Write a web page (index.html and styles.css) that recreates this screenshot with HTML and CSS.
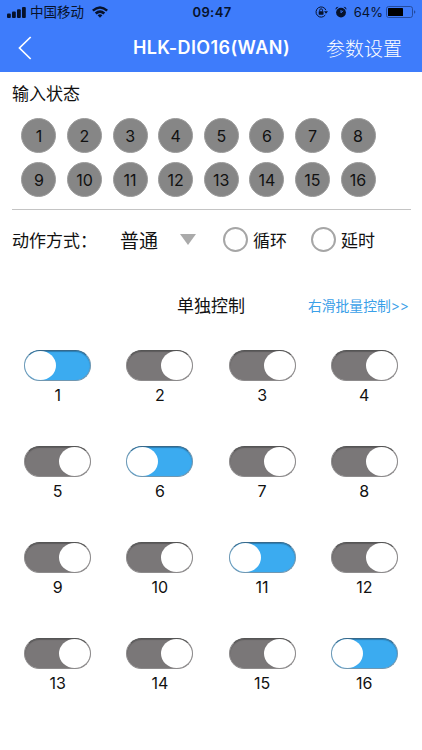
FILE: index.html
```html
<!DOCTYPE html>
<html lang="zh-CN">
<head>
    <meta charset="UTF-8">
    <meta name="viewport" content="width=device-width, initial-scale=1.0">
    <title>HLK-DIO16(WAN)</title>
    <link rel="stylesheet" href="styles.css">
</head>
<body>
    <header class="top">
        <div class="status-bar">
            <div class="status-left">
                <svg class="signal" width="19" height="11" viewBox="0 0 19 11">
                    <rect x="0" y="6.5" width="3.8" height="4.5" rx="1"/>
                    <rect x="5" y="4.5" width="3.8" height="6.5" rx="1"/>
                    <rect x="10" y="2.3" width="3.8" height="8.7" rx="1"/>
                    <rect x="15" y="0" width="3.8" height="11" rx="1"/>
                </svg>
                <span class="carrier">中国移动</span>
                <svg class="wifi" width="16" height="12" viewBox="0 0 16 12">
                    <path d="M0 3.8 Q8 -3.4 16 3.8 L14.3 5.6 Q8 0 1.7 5.6Z"/>
                    <path d="M2.8 6.6 Q8 2 13.2 6.6 L11.4 8.4 Q8 5.4 4.6 8.4Z"/>
                    <path d="M5.6 9.3 Q8 7.1 10.4 9.3 L8 11.7Z"/>
                </svg>
            </div>
            <span class="time">09:47</span>
            <div class="status-right">
                <svg class="lock" width="13" height="12" viewBox="0 0 13 12">
                    <path d="M10.9 4.2 A5.1 5.1 0 1 0 10.3 9" fill="none" stroke="#07122b" stroke-width="1"/>
                    <path d="M9 5.2h4L11 7.8z"/>
                    <rect x="3.7" y="5.2" width="4.8" height="3.5" rx=".4"/>
                    <path d="M4.7 5.4V4.2a1.4 1.4 0 0 1 2.8 0v1.2" fill="none" stroke="#07122b" stroke-width=".9"/>
                </svg>
                <svg class="alarm" width="12" height="12" viewBox="0 0 12 12">
                    <circle cx="6" cy="6.6" r="4.9"/>
                    <path d="M.6 3.8Q.2 .9 3.6 .8zM11.4 3.8Q11.8 .9 8.4 .8z"/>
                    <path d="M6 6.9V4M6 6.6l2.2-1.8" fill="none" stroke="#3e7cfb" stroke-width=".9"/>
                </svg>
                <span class="percent">64%</span>
                <svg class="battery" width="30" height="12" viewBox="0 0 30 12">
                    <rect x=".5" y=".5" width="26" height="11" rx="2.2" fill="none" stroke="#244b9e"/>
                    <rect x="2" y="2" width="15" height="8" rx=".6" fill="#000"/>
                    <path d="M28 4.2q1.4 .5 1.4 1.8T28 7.8z" fill="#244b9e"/>
                </svg>
            </div>
        </div>
        <nav class="nav-bar">
            <svg class="back" width="14" height="24" viewBox="0 0 14 24">
                <path d="M12.7 1L1.5 12l11.2 11" fill="none" stroke="#fff" stroke-width="1.7"/>
            </svg>
            <h1 class="title">HLK-DIO16(WAN)</h1>
            <span class="settings">参数设置</span>
        </nav>
    </header>

    <section class="inputs">
        <h2 class="label">输入状态</h2>
        <div class="input-grid">
            <span>1</span><span>2</span><span>3</span><span>4</span>
            <span>5</span><span>6</span><span>7</span><span>8</span>
            <span>9</span><span>10</span><span>11</span><span>12</span>
            <span>13</span><span>14</span><span>15</span><span>16</span>
        </div>
    </section>

    <section class="mode">
        <span class="mode-label">动作方式：</span>
        <span class="mode-value">普通</span>
        <i class="arrow"></i>
        <span class="radio"><i></i>循环</span>
        <span class="radio"><i></i>延时</span>
    </section>

    <section class="control-head">
        <h2 class="label">单独控制</h2>
        <span class="batch">右滑批量控制&gt;&gt;</span>
    </section>

    <section class="switch-grid">
        <div class="item"><div class="switch on"></div><span>1</span></div>
        <div class="item"><div class="switch"></div><span>2</span></div>
        <div class="item"><div class="switch"></div><span>3</span></div>
        <div class="item"><div class="switch"></div><span>4</span></div>
        <div class="item"><div class="switch"></div><span>5</span></div>
        <div class="item"><div class="switch on"></div><span>6</span></div>
        <div class="item"><div class="switch"></div><span>7</span></div>
        <div class="item"><div class="switch"></div><span>8</span></div>
        <div class="item"><div class="switch"></div><span>9</span></div>
        <div class="item"><div class="switch"></div><span>10</span></div>
        <div class="item"><div class="switch on"></div><span>11</span></div>
        <div class="item"><div class="switch"></div><span>12</span></div>
        <div class="item"><div class="switch"></div><span>13</span></div>
        <div class="item"><div class="switch"></div><span>14</span></div>
        <div class="item"><div class="switch"></div><span>15</span></div>
        <div class="item"><div class="switch on"></div><span>16</span></div>
    </section>
</body>
</html>
```
FILE: styles.css
```css
* {
    box-sizing: border-box;
}
body {
    margin: 0;
    height: 750px;
    overflow: hidden;
    background: #fff;
    color: #111;
    font-family: Inter, "Noto Sans CJK SC", sans-serif;
}
svg {
    display: block;
    flex: none;
}
.top {
    height: 72px;
    background: #3e7cfb;
}
/* 状态栏 */
.status-bar {
    display: grid;
    grid-template-columns: 1fr auto 1fr;
    align-items: center;
    height: 24px;
    padding: 0 6px 0 7px;
    color: #07122b;
    fill: #07122b;
    line-height: 24px;
}
.status-left, .status-right {
    display: flex;
    align-items: center;
}
.status-right {
    justify-content: flex-end;
}
.carrier {
    margin: 0 8px 0 4px;
    font-size: 13.5px;
}
.time {
    padding-left: 1px;
    font-size: 13px;
    font-weight: 600;
    letter-spacing: 0.4px;
}
.alarm {
    margin: 0 7px 0 7px;
}
.percent {
    margin-right: 3px;
    font-size: 13px;
}
/* 导航栏 */
.nav-bar {
    display: grid;
    grid-template-columns: 1fr auto 1fr;
    align-items: center;
    height: 47px;
    padding: 0 20px 0 18px;
    color: #fff;
}
.title {
    margin: 0;
    padding-left: 3px;
    font-size: 18px;
    font-weight: 600;
    letter-spacing: 0.4px;
}
.settings {
    text-align: right;
    font-size: 19px;
    font-weight: 300;
}
/* 输入状态 */
.inputs {
    height: 138px;
    margin: 0 11px 0 12px;
    padding-top: 10px;
    border-bottom: 1px solid #c4c4c4;
}
.label {
    margin: 0;
    font-size: 17px;
    font-weight: 400;
    line-height: 24px;
}
.input-grid {
    display: grid;
    grid-template-columns: repeat(8, 35px);
    gap: 9px 10.6px;
    margin: 12px 0 0 9.4px;
}
.input-grid span {
    height: 35px;
    border: 1px solid #9c9c9c;
    border-radius: 50%;
    background: #868686;
    text-align: center;
    font-size: 16px;
    line-height: 34px;
}
/* 动作方式 */
.mode {
    display: flex;
    align-items: center;
    height: 59px;
    padding-left: 12px;
    font-size: 17px;
}
.mode-label {
    width: 108px;
}
.mode-value {
    width: 60px;
    font-size: 19px;
}
.arrow {
    width: 0;
    margin-right: 27px;
    border: solid transparent;
    border-width: 11px 8.5px 0;
    border-top-color: #aaa;
}
.radio {
    display: flex;
    align-items: center;
    gap: 5px;
    width: 88px;
}
.radio i {
    width: 25px;
    height: 25px;
    border: 2px solid #a6a6a6;
    border-radius: 50%;
}
/* 单独控制 */
.control-head {
    display: grid;
    grid-template-columns: 1fr auto 1fr;
    align-items: center;
    height: 81px;
    padding: 0 13px 8px;
}
.control-head .label {
    grid-column: 2;
}
.batch {
    padding-bottom: 2px;
    text-align: right;
    color: #3aa0e8;
    font-size: 13.8px;
    white-space: nowrap;
}
.switch-grid {
    display: grid;
    grid-template-columns: repeat(4, 102.2px);
    grid-auto-rows: 96px;
    justify-content: center;
}
.item {
    display: flex;
    flex-direction: column;
    align-items: center;
    font-size: 16px;
    line-height: 28px;
}
.switch {
    display: flex;
    justify-content: flex-end;
    width: 67px;
    height: 31px;
    border: 1px solid #8d8b8c;
    border-top-color: #555;
    border-radius: 16px;
    background: #7a7778;
    box-shadow: inset 0 1px 1px #5c5a5b;
}
.switch::after {
    content: "";
    width: 31px;
    height: 29px;
    border-radius: 50%;
    background: #fff;
}
.switch.on {
    justify-content: flex-start;
    border-color: #7097b1;
    border-top-color: #37698b;
    background: #3babf0;
    box-shadow: inset 0 1px 1px #2b7db2;
}
```
